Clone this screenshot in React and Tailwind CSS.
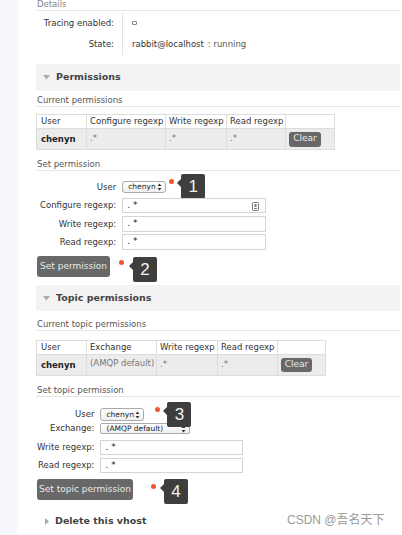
import React from "react";

const Arrows = () => (
  <svg width="5" height="8" viewBox="0 0 5 8" className="shrink-0">
    <path d="M2.5 0.5 L4.5 3 L0.5 3 Z" fill="#333" />
    <path d="M2.5 7.5 L4.5 5 L0.5 5 Z" fill="#333" />
  </svg>
);

const Select = ({ children, className }) => (
  <span
    className={
      "flex items-center justify-between border border-[#aaa] rounded-[3px] bg-gradient-to-b from-white to-[#f0f0f0] pl-[5px] pr-[3px] text-[7.5px] text-[#222] leading-none whitespace-nowrap " +
      className
    }
  >
    <span>{children}</span>
    <Arrows />
  </span>
);

const Input = ({ className, icon }) => (
  <div
    className={
      "relative flex items-center border border-[#d4d4d4] bg-white pl-[4px] text-[9px] text-[#222] " +
      className
    }
  >
    . *
    {icon && (
      <svg
        width="7"
        height="9"
        viewBox="0 0 7 9"
        className="absolute right-[6px] top-[3px]"
      >
        <rect x="0.5" y="0.5" width="6" height="8" rx="1" fill="#fff" stroke="#777" />
        <rect x="2.5" y="2" width="2" height="3" fill="#777" />
        <rect x="2" y="6" width="3" height="1" fill="#777" />
      </svg>
    )}
  </div>
);

const Callout = ({ n, dotClass, boxClass }) => (
  <span className="relative w-0 h-0 self-start">
    <span className={"absolute w-[5px] h-[5px] rounded-full bg-[#f2542d] " + dotClass} />
    <span
      className={
        "absolute w-[24px] h-[25px] rounded-[2px] bg-[#3e3e3e] text-[#f4f4f4] flex items-center justify-center text-[17px] font-['Liberation_Sans'] " +
        boxClass
      }
    >
      <span className="absolute left-[-4px] top-[5px] w-0 h-0 border-y-[4px] border-y-transparent border-r-[4px] border-r-[#3e3e3e]" />
      {n}
    </span>
  </span>
);

const SectionHeader = ({ title, open = true, className = "" }) => (
  <div className={"flex items-center bg-[#f3f3f3] pl-[7px] " + className}>
    {open ? (
      <svg width="7" height="5" viewBox="0 0 7 5" className="mr-[6px]">
        <path d="M0 0 L7 0 L3.5 4.5 Z" fill="#aaa" />
      </svg>
    ) : null}
    <span className="font-bold text-[9.5px] text-[#444]">{title}</span>
  </div>
);

const SubTitle = ({ children, className = "" }) => (
  <div
    className={
      "h-[14px] leading-[14px] border-b border-[#e6e6e6] text-[#555] text-[8.5px] pl-[1px] " +
      className
    }
  >
    {children}
  </div>
);

const Btn = ({ children, className = "" }) => (
  <span
    className={
      "flex items-center justify-center rounded-[3px] bg-[#686868] text-[#e8e8e8] text-[9px] " +
      className
    }
  >
    {children}
  </span>
);

export default function App() {
  return (
    <div className="flex w-[402px] h-[535px] bg-white overflow-hidden font-['DejaVu_Sans',sans-serif] text-[9px] text-[#444] relative">
      <div className="w-[18px] shrink-0 bg-[#f6f8fb]" />
      <div className="w-[364px] ml-[18px] flex flex-col">
        {/* Details */}
        <div className="h-[11px] leading-[8px] border-b border-[#e6e6e6] text-[#888] text-[8.5px] pl-[1px]">
          Details
        </div>
        <div className="mt-[2px] grid grid-cols-[87px_1fr] text-[8.5px]">
          <div className="h-[20px] flex items-center justify-end pr-[8px] pt-[1px] border-r border-[#e2e2e2] text-[#333]">
            Tracing enabled:
          </div>
          <div className="h-[20px] flex items-center pl-[9px]">
            <span className="w-[5px] h-[4px] border border-[#888] rounded-[1px]" />
          </div>
          <div className="h-[22px] flex items-center justify-end pr-[8px] border-r border-[#e2e2e2] text-[#333]">
            State:
          </div>
          <div className="h-[22px] flex items-center pl-[9px] text-[#333]">
            rabbit@localhost<span className="ml-[4px] text-[#555]">: running</span>
          </div>
        </div>

        {/* Permissions */}
        <SectionHeader title="Permissions" className="mt-[9px] h-[27px]" />
        <SubTitle className="mt-[2px]">Current permissions</SubTitle>
        <table className="mt-[7px] w-[298px] border-collapse text-[8.5px] table-fixed">
          <colgroup>
            <col className="w-[50px]" />
            <col className="w-[79px]" />
            <col className="w-[61px]" />
            <col className="w-[59px]" />
            <col className="w-[49px]" />
          </colgroup>
          <tbody>
            <tr className="h-[14px]">
              <td className="border border-[#ddd] pl-[4px] text-[#333] whitespace-nowrap">User</td>
              <td className="border border-[#ddd] pl-[3px] text-[#333] whitespace-nowrap">Configure regexp</td>
              <td className="border border-[#ddd] pl-[3px] text-[#333] whitespace-nowrap">Write regexp</td>
              <td className="border border-[#ddd] pl-[3px] text-[#333] whitespace-nowrap">Read regexp</td>
              <td className="border border-[#ddd]"></td>
            </tr>
            <tr className="h-[21px] bg-[#ececec]">
              <td className="border border-[#ddd] pl-[4px] font-bold text-[#222]">chenyn</td>
              <td className="border border-[#ddd] pl-[3px] text-[#777] align-top pt-[3px]">.*</td>
              <td className="border border-[#ddd] pl-[3px] text-[#777] align-top pt-[3px]">.*</td>
              <td className="border border-[#ddd] pl-[3px] text-[#777] align-top pt-[3px]">.*</td>
              <td className="border border-[#ddd] pl-[3px]">
                <Btn className="w-[32px] h-[15px]">Clear</Btn>
              </td>
            </tr>
          </tbody>
        </table>
        <SubTitle className="mt-[7px]">Set permission</SubTitle>

        <div className="mt-[10px] grid grid-cols-[auto_1fr] gap-x-[6px] pl-[4px] text-[8.5px] text-[#333]">
          <div className="h-[12px] flex items-center justify-end">User</div>
          <div className="h-[12px] flex items-center">
            <Select className="w-[44px] h-[12px]">chenyn</Select>
            <Callout n="1" dotClass="left-[3px] top-[-2px]" boxClass="left-[15px] top-[-7px]" />
          </div>
          <div className="mt-[5px] h-[15px] flex items-center justify-end">Configure regexp:</div>
          <div className="mt-[5px]">
            <Input className="w-[144px] h-[15px]" icon />
          </div>
          <div className="mt-[3px] h-[16px] flex items-center justify-end">Write regexp:</div>
          <div className="mt-[3px]">
            <Input className="w-[144px] h-[16px]" />
          </div>
          <div className="mt-[2px] h-[16px] flex items-center justify-end">Read regexp:</div>
          <div className="mt-[2px]">
            <Input className="w-[144px] h-[16px]" />
          </div>
        </div>
        <div className="mt-[6px] flex">
          <Btn className="w-[73px] h-[21px] ml-[1px]">Set permission</Btn>
          <Callout n="2" dotClass="left-[9px] top-[4px]" boxClass="left-[23px] top-[1px]" />
        </div>

        {/* Topic permissions */}
        <SectionHeader title="Topic permissions" className="mt-[8px] h-[26px]" />
        <SubTitle className="mt-[6px]">Current topic permissions</SubTitle>
        <table className="mt-[9px] w-[289px] border-collapse text-[8.5px] table-fixed">
          <colgroup>
            <col className="w-[50px]" />
            <col className="w-[70px]" />
            <col className="w-[61px]" />
            <col className="w-[60px]" />
            <col className="w-[48px]" />
          </colgroup>
          <tbody>
            <tr className="h-[14px]">
              <td className="border border-[#ddd] pl-[4px] text-[#333] whitespace-nowrap">User</td>
              <td className="border border-[#ddd] pl-[3px] text-[#333] whitespace-nowrap">Exchange</td>
              <td className="border border-[#ddd] pl-[3px] text-[#333] whitespace-nowrap">Write regexp</td>
              <td className="border border-[#ddd] pl-[3px] text-[#333] whitespace-nowrap">Read regexp</td>
              <td className="border border-[#ddd]"></td>
            </tr>
            <tr className="h-[21px] bg-[#ececec]">
              <td className="border border-[#ddd] pl-[4px] font-bold text-[#222]">chenyn</td>
              <td className="border border-[#ddd] pl-[3px] text-[#777] align-top pt-[2px] whitespace-nowrap">(AMQP default)</td>
              <td className="border border-[#ddd] pl-[3px] text-[#777] align-top pt-[3px]">.*</td>
              <td className="border border-[#ddd] pl-[3px] text-[#777] align-top pt-[3px]">.*</td>
              <td className="border border-[#ddd] pl-[3px]">
                <Btn className="w-[31px] h-[14px]">Clear</Btn>
              </td>
            </tr>
          </tbody>
        </table>
        <SubTitle className="mt-[7px]">Set topic permission</SubTitle>

        <div className="mt-[11px] grid grid-cols-[auto_1fr] gap-x-[6px] pl-[1px] text-[8.5px] text-[#333]">
          <div className="h-[13px] flex items-center justify-end">User</div>
          <div className="h-[13px] flex items-center">
            <Select className="w-[44px] h-[13px]">chenyn</Select>
            <Callout n="3" dotClass="left-[11px] top-[-1px]" boxClass="left-[23px] top-[-6px]" />
          </div>
          <div className="mt-[2px] h-[11px] flex items-center justify-end">Exchange:</div>
          <div className="mt-[2px] h-[11px] flex items-center">
            <Select className="w-[90px] h-[11px] !rounded-[2px]">(AMQP default)</Select>
          </div>
          <div className="mt-[6px] h-[15px] flex items-center justify-end">Write regexp:</div>
          <div className="mt-[6px]">
            <Input className="w-[143px] h-[15px]" />
          </div>
          <div className="mt-[3px] h-[15px] flex items-center justify-end">Read regexp:</div>
          <div className="mt-[3px]">
            <Input className="w-[143px] h-[15px]" />
          </div>
        </div>
        <div className="mt-[6px] flex">
          <Btn className="w-[96px] h-[21px] ml-[1px]">Set topic permission</Btn>
          <Callout n="4" dotClass="left-[18px] top-[5px]" boxClass="left-[31px] top-[0px]" />
        </div>

        <div className="mt-[14px] h-[14px] flex items-center pl-[9px]">
          <svg width="4" height="7" viewBox="0 0 4 7" className="mr-[6px]">
            <path d="M0 0 L4 3.5 L0 7 Z" fill="#aaa" />
          </svg>
          <span className="font-bold text-[9.5px] text-[#444]">Delete this vhost</span>
        </div>
      </div>

      <div className="absolute left-[287px] top-[511px] text-[12px] text-[#9a9a9a] font-['Liberation_Sans','Noto_Sans_CJK_SC',sans-serif] whitespace-nowrap">
        CSDN @吾名天下
      </div>
    </div>
  );
}
